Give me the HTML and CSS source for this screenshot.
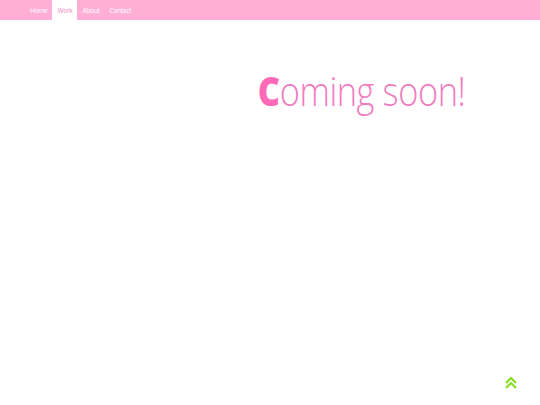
FILE: index.html
```html
<!DOCTYPE html>
<html>
<head>
<meta charset="utf-8">
<link rel="stylesheet" href="styles.css">
</head>
<body>
<nav class="nav">
  <ul class="menu">
    <li class="item"><a href="#">Home</a></li>
    <li class="item active"><a href="#">Work</a></li>
    <li class="item"><a href="#">About</a></li>
    <li class="item"><a href="#">Contact</a></li>
  </ul>
</nav>
<main class="main">
  <h1 class="title"><span class="cap">C</span>oming soon!</h1>
</main>
<a class="totop" href="#">
  <svg width="14" height="14" viewBox="0 0 14 14"><path d="M2 7 L7 2 L12 7 M2 12 L7 7 L12 12" fill="none" stroke="#88dd22" stroke-width="2.2"/></svg>
</a>
</body>
</html>
```
FILE: styles.css
```css
html, body { margin: 0; padding: 0; background: #fff; }
body { font-family: "Open Sans", "DejaVu Sans", sans-serif; height: 405px; overflow: hidden; }
.nav { background: #ffaed6; height: 20px; }
.menu { list-style: none; margin: 0; padding: 0 0 0 25px; display: flex; height: 20px; }
.item a { display: block; height: 20px; line-height: 21px; padding: 0 5px; font-size: 6.6px; color: #fff; text-decoration: none; letter-spacing: -0.3px; }
.item.active a { background: #fff; color: #ee88c4; }
.main { display: flex; justify-content: flex-end; padding: 47px 75px 0 0; }
.title { margin: 0; font-family: "Open Sans", sans-serif; font-weight: 300; font-size: 40px; line-height: 48px; color: #f07cc0; letter-spacing: -0.5px; transform: scaleX(0.86); transform-origin: right; }
.cap { font-weight: 800; color: #ff6ab8; }
.totop { position: absolute; left: 504px; top: 376px; width: 14px; height: 14px; display: block; }
.totop svg { display: block; }
```
